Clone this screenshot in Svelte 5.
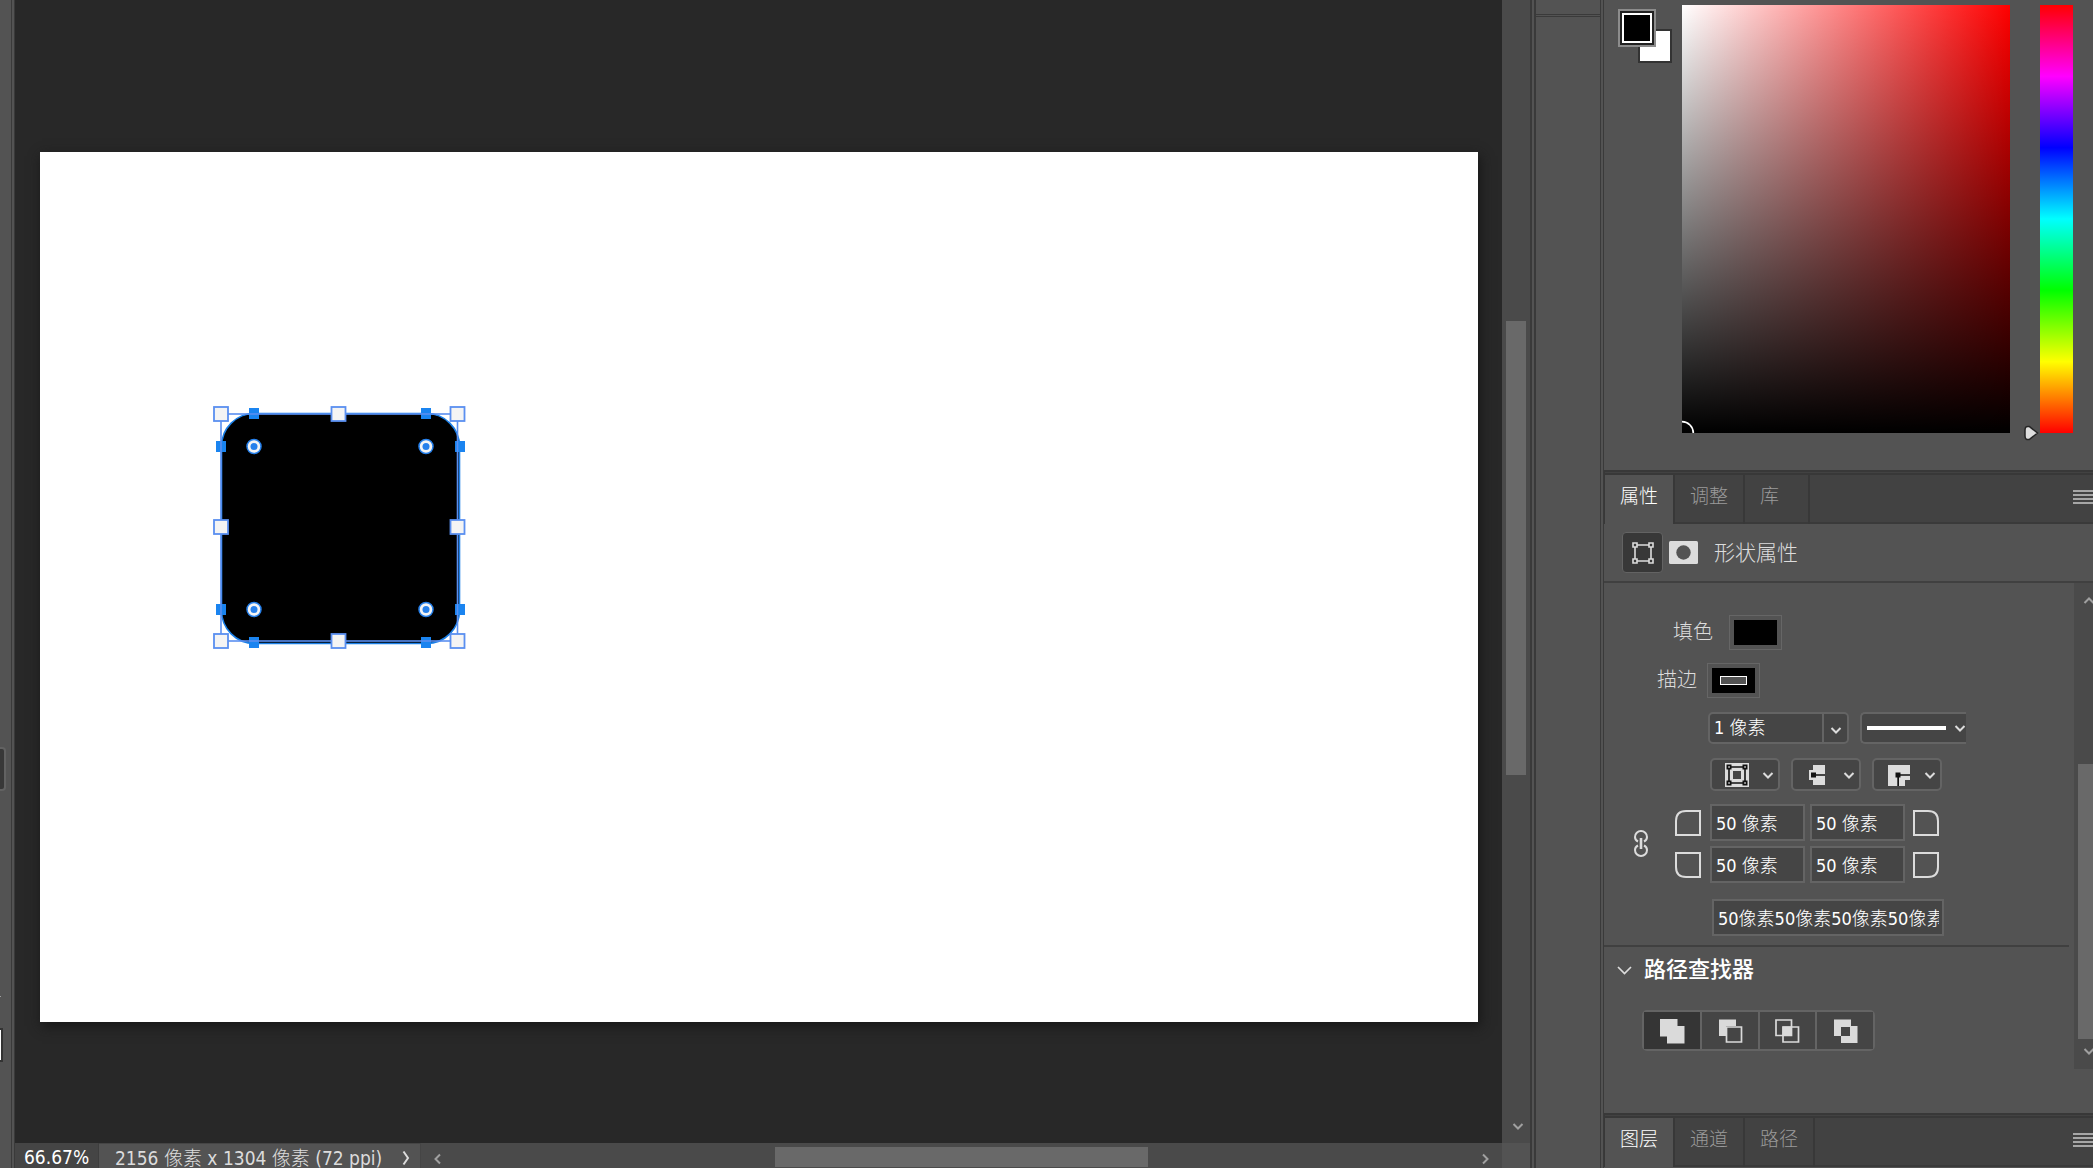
<script>
  let zoom = "66.67%"
  let strokeWidth = "1 像素"
  let radii = ["50 像素", "50 像素", "50 像素", "50 像素"]
  let radiusSummary = "50像素50像素50像素50像素"
  let activeOperation = "unite"

  const panelTabs = ["属性", "调整", "库"]
  const layerTabs = ["图层", "通道", "路径"]

  const boxHandles = [
    [21, 24],
    [138.5, 24],
    [257.5, 24],
    [21, 137],
    [257.5, 137],
    [21, 251],
    [138.5, 251],
    [257.5, 251],
  ]

  const anchors = [
    [53, 23],
    [225, 23],
    [20, 56],
    [259, 56],
    [20, 219],
    [259, 219],
    [53, 252],
    [225, 252],
  ]

  const cornerDots = [
    [54, 56.5],
    [226, 56.5],
    [54, 219.5],
    [226, 219.5],
  ]

  const operations = [
    { id: "unite", label: "合并形状" },
    { id: "subtract", label: "减去顶层形状" },
    { id: "intersect", label: "与形状区域相交" },
    { id: "exclude", label: "排除重叠形状" },
  ]
</script>

{#snippet chevron(direction)}
  <svg class="chevron {direction}" viewBox="0 0 12 12" aria-hidden="true">
    <path d="M1.5 4 6 8.500 10.500 4" />
  </svg>
{/snippet}

{#snippet tabBar(tabs)}
  <div class="tabs" role="tablist">
    {#each tabs as tab, i}
      <button class="tab" class:active={i === 0} role="tab" aria-selected={i === 0}>{tab}</button>
    {/each}
    <button class="menu" aria-label="面板菜单">
      <svg width="20" height="15" viewBox="0 0 20 15" aria-hidden="true">
        <path d="M0 1h20M0 5h20M0 9h20M0 13h20" stroke="#a6a6a6" stroke-width="2" />
      </svg>
    </button>
  </div>
{/snippet}

{#snippet corner(name)}
  <svg class="corner {name}" width="26" height="26" viewBox="0 0 26 26" aria-hidden="true">
    <path d="M1 25V11Q1 1 11 1H25V25Z" fill="none" stroke="#dcdcdc" stroke-width="2" />
  </svg>
{/snippet}

<div class="app">
  <div class="toolbar">
    <span class="tool"></span>
    <span class="toolbar-mark"></span>
    <span class="toolbar-swatch"></span>
  </div>

  <main>
    <div class="workspace">
      <div class="viewport">
        <div class="artboard">
          <svg class="shape" width="280" height="270" viewBox="0 0 280 270">
            <rect x="21.500" y="23.500" width="238" height="230" rx="33" fill="#000" stroke="#1b7fe6" stroke-width="1.600" />
            {#each anchors as [x, y]}
              <rect x={x - 4} y={y - 5} width="10" height="11" fill="#1a84f0" />
            {/each}
            <rect x="21" y="24" width="236.500" height="227" fill="none" stroke="#5a8ff0" stroke-width="1.600" />
            {#each boxHandles as [x, y]}
              <rect x={x - 7} y={y - 7} width="14" height="14" fill="#f4f4f4" stroke="#5a8ff0" stroke-width="1.800" />
            {/each}
            {#each cornerDots as [x, y]}
              <circle cx={x} cy={y} r="7" fill="#f4f4f4" stroke="#2680eb" stroke-width="1.500" />
              <circle cx={x} cy={y} r="3.500" fill="#2680eb" />
            {/each}
          </svg>
        </div>
      </div>
      <div class="scroll-y">
        <span class="thumb"></span>
        {@render chevron("down")}
      </div>
    </div>
    <footer>
      <input class="zoom" aria-label="缩放" bind:value={zoom} />
      <button class="info">
        <span>2156 像素 x 1304 像素 (72 ppi)</span>
        <svg width="8" height="16" viewBox="0 0 8 16" aria-hidden="true">
          <path d="M1.500 1.500 6 8 1.500 14.500" fill="none" stroke="#dcdcdc" stroke-width="2" />
        </svg>
      </button>
      <div class="scroll-x">
        {@render chevron("left")}
        <span class="thumb"></span>
        {@render chevron("right")}
      </div>
      <span class="resize"></span>
    </footer>
  </main>

  <div class="dock">
    <span class="dock-head"></span>
    <span class="dock-body"></span>
  </div>

  <aside>
    <section class="color">
      <div class="swatches">
        <button class="background" aria-label="背景色"></button>
        <button class="foreground" aria-label="前景色"></button>
      </div>
      <div class="field">
        <svg width="13" height="13" viewBox="0 0 13 13" aria-hidden="true">
          <circle cx="0" cy="13" r="11.300" fill="none" stroke="#fff" stroke-width="1.700" />
        </svg>
      </div>
      <svg class="pointer" width="15" height="16" viewBox="0 0 15 16" aria-hidden="true">
        <path d="M5.500 1.600 13.500 8 5.500 14.400Q1 15.500 1 11V5Q1 .5 5.500 1.600Z" fill="#dedede" stroke="#252525" stroke-width="1.500" />
      </svg>
      <div class="hue"></div>
    </section>

    <section class="properties">
      {@render tabBar(panelTabs)}
      <header>
        <button class="mode" aria-label="形状">
          <svg width="22" height="22" viewBox="0 0 22 22" aria-hidden="true">
            <g fill="none" stroke="#dcdcdc" stroke-width="1.600">
              <path d="M5 3H17M5 19H17M3 5V17M19 5V17" />
              <path d="M1 1h4v4H1zM17 1h4v4h-4zM1 17h4v4H1zM17 17h4v4h-4z" />
            </g>
          </svg>
        </button>
        <svg width="29" height="23" viewBox="0 0 29 23" aria-hidden="true">
          <rect width="29" height="23" rx="1.500" fill="#dcdcdc" />
          <circle cx="14.500" cy="11.500" r="7.200" fill="#535353" />
        </svg>
        <h2>形状属性</h2>
      </header>

      <div class="scroller">
        <div class="content">
          <div class="row fill">
            <span>填色</span>
            <button class="chip" aria-label="填色"><i></i></button>
          </div>
          <div class="row stroke">
            <span>描边</span>
            <button class="chip" aria-label="描边"><i><b></b></i></button>
          </div>

          <div class="row width">
            <div class="combo">
              <input aria-label="描边宽度" bind:value={strokeWidth} />
              <button aria-label="选择宽度">{@render chevron("down")}</button>
            </div>
            <div class="drop line">
              <select aria-label="描边类型"><option></option></select>
              <span class="face"><em></em>{@render chevron("down")}</span>
            </div>
          </div>

          <div class="row options">
            <div class="drop">
              <select aria-label="对齐"><option></option></select>
              <span class="face">
                <svg width="26" height="26" viewBox="0 0 26 26" aria-hidden="true">
                  <path d="M1 1H25V25H1Z" fill="#dcdcdc" />
                  <path d="M5 5H21V21H5Z" fill="none" stroke="#111" stroke-width="1.600" />
                  <path d="M9 9H17V17H9Z" fill="#454545" />
                  <path d="M2.500 2.500h5v5h-5zM18.500 2.500h5v5h-5zM2.500 18.500h5v5h-5zM18.500 18.500h5v5h-5z" fill="#111" />
                  <path d="M4.300 4.300h1.500v1.500h-1.500zM20.300 4.300h1.500v1.500h-1.500zM4.300 20.300h1.500v1.500h-1.500zM20.300 20.300h1.500v1.500h-1.500z" fill="#dcdcdc" />
                </svg>
                {@render chevron("down")}
              </span>
            </div>
            <div class="drop">
              <select aria-label="端点"><option></option></select>
              <span class="face">
                <svg width="26" height="26" viewBox="0 0 26 26" aria-hidden="true">
                  <path d="M8 3H20V23H8V18H4V8H8Z" fill="#dcdcdc" />
                  <path d="M6 10.500h5V12.300H20V13.800H11V15.500H6Z" fill="#111" />
                </svg>
                {@render chevron("down")}
              </span>
            </div>
            <div class="drop">
              <select aria-label="角点"><option></option></select>
              <span class="face">
                <svg width="26" height="26" viewBox="0 0 26 26" aria-hidden="true">
                  <path d="M2 3H24V18H19V24H2Z" fill="#dcdcdc" />
                  <path d="M9.500 10.500h5V12.300H24V13.800H14.500V15.500H13V24H11.300V15.500H9.500Z" fill="#111" />
                </svg>
                {@render chevron("down")}
              </span>
            </div>
          </div>

          <div class="radii">
            <button class="link" aria-label="链接圆角半径">
              <svg width="14" height="27" viewBox="0 0 14 27" aria-hidden="true">
                <g fill="none" stroke="#dcdcdc" stroke-width="2">
                  <path d="M4 11.500Q1 10 1 7A6 6 0 0 1 13 7Q13 10 10 11.500" />
                  <path d="M4 15.500Q1 17 1 20A6 6 0 0 0 13 20Q13 17 10 15.500" />
                  <path d="M7 8V19" stroke-width="2.600" />
                </g>
              </svg>
            </button>
            <div class="radius-grid">
              {@render corner("top-left")}
              <input aria-label="左上角半径" bind:value={radii[0]} />
              <input aria-label="右上角半径" bind:value={radii[1]} />
              {@render corner("top-right")}
              {@render corner("bottom-left")}
              <input aria-label="左下角半径" bind:value={radii[2]} />
              <input aria-label="右下角半径" bind:value={radii[3]} />
              {@render corner("bottom-right")}
            </div>
          </div>
          <input class="summary" aria-label="圆角半径" bind:value={radiusSummary} />

          <button class="heading">
            <svg width="15" height="9" viewBox="0 0 15 9" aria-hidden="true">
              <path d="M1 1 7.500 7.500 14 1" fill="none" stroke="#dcdcdc" stroke-width="1.700" />
            </svg>
            路径查找器
          </button>
          <div class="operations">
            {#each operations as { id, label }}
              <button
                class:active={activeOperation === id}
                aria-label={label}
                on:click={() => (activeOperation = id)}>
                <svg width="26" height="26" viewBox="0 0 26 26" aria-hidden="true">
                  {#if id === "unite"}
                    <path d="M1 1H18.500V8H25.500V25.500H8V18.500H1Z" fill="#dadada" />
                  {:else if id === "subtract"}
                    <path d="M2 1.500H19V8H9V18H2Z" fill="#dadada" />
                    <path d="M9.500 9H24.500V24H9.500Z" fill="none" stroke="#dadada" stroke-width="1.700" />
                  {:else if id === "intersect"}
                    <path d="M2 2H17.500V17.500H2ZM9 9H24.500V24H9Z" fill="none" stroke="#dadada" stroke-width="1.700" />
                    <path d="M8.500 8.500H18V18H8.500Z" fill="#dadada" />
                  {:else}
                    <path d="M2 1.500H19V8H25.500V25H9V18H2Z" fill="#dadada" />
                    <path d="M9 9H18V18H9Z" fill="#454545" />
                  {/if}
                </svg>
              </button>
            {/each}
          </div>
        </div>

        <div class="panel-scroll">
          {@render chevron("up")}
          <span class="thumb"></span>
          {@render chevron("down")}
        </div>
      </div>
    </section>

    <section class="layers">
      {@render tabBar(layerTabs)}
    </section>
  </aside>
</div>

<style>
  :global(body) {
    margin: 0;
    background: #535353;
  }

  .app {
    display: flex;
    height: 100vh;
    overflow: hidden;
    background: #535353;
    color: #dcdcdc;
    font-family: "DejaVu Sans Condensed", "Noto Sans CJK SC", sans-serif;
    font-size: 18px;
    font-weight: 300;
    line-height: 24px;
  }

  .app * {
    box-sizing: border-box;
  }

  button,
  input,
  select {
    margin: 0;
    padding: 0;
    border: 0;
    border-radius: 0;
    background: none;
    color: inherit;
    font: inherit;
    outline: none;
  }

  svg {
    display: block;
    flex: none;
  }

  .chevron {
    width: 12px;
    height: 12px;
    fill: none;
    stroke: #dcdcdc;
    stroke-width: 2;
  }

  .chevron.up {
    transform: rotate(180deg);
  }

  .chevron.left {
    transform: rotate(90deg);
  }

  .chevron.right {
    transform: rotate(-90deg);
  }

  .scroll-x .chevron,
  .scroll-y .chevron,
  .panel-scroll .chevron {
    stroke: #a0a0a0;
  }

  .thumb {
    background: #696969;
  }

  .toolbar {
    flex: none;
    display: flex;
    flex-direction: column;
    align-items: flex-start;
    width: 15px;
    padding-top: 747px;
    border-right: 4px double #3a3a3a;
  }

  .tool {
    width: 6px;
    height: 44px;
    border: 2px solid #626262;
    border-left: 0;
    border-radius: 0 4px 4px 0;
    background: #383838;
  }

  .toolbar-mark {
    width: 1px;
    height: 1px;
    margin-top: 205px;
    background: #a0a0a0;
  }

  .toolbar-swatch {
    width: 3px;
    height: 34px;
    margin-top: 31px;
    border: 2px solid #333;
    border-left: 0;
    background: #fff;
  }

  main {
    flex: 1;
    min-width: 0;
    display: flex;
    flex-direction: column;
  }

  .workspace {
    flex: 1;
    min-height: 0;
    display: flex;
  }

  .viewport {
    flex: 1;
    min-width: 0;
    overflow: hidden;
    padding: 152px 24px 0 25px;
    background: #282828;
  }

  .artboard {
    position: relative;
    aspect-ratio: 2156 / 1304;
    background: #fff;
    box-shadow: 2px 4px 12px #161616;
  }

  .shape {
    position: absolute;
    left: 160px;
    top: 238px;
  }

  .scroll-y {
    flex: none;
    display: grid;
    grid-template-rows: 321fr 454fr 368fr;
    justify-items: center;
    width: 28px;
    background: #4a4a4a;
  }

  .scroll-y .thumb {
    grid-row: 2;
    width: 20px;
  }

  .scroll-y .chevron {
    grid-row: 3;
    align-self: end;
    margin: 0 0 11px 3px;
  }

  footer {
    flex: none;
    display: flex;
    height: 25px;
    font-size: 19px;
    line-height: 20px;
  }

  .zoom {
    width: 84px;
    padding: 2px 0 0 9px;
    border-right: 1px solid #3e3e3e;
    background: #454545;
    color: #fff;
  }

  .info {
    display: flex;
    align-items: center;
    justify-content: space-between;
    width: 322px;
    padding: 4px 10px 0 16px;
    border-top: 1px solid #454545;
    border-right: 1px solid #454545;
    white-space: nowrap;
  }

  .scroll-x {
    flex: 1;
    display: grid;
    grid-template-columns: 354fr 373fr 354fr;
    align-items: center;
    background: #4a4a4a;
  }

  .scroll-x .thumb {
    height: 20px;
    margin-top: 3px;
  }

  .scroll-x .chevron {
    margin: 6px 11px 0;
  }

  .scroll-x .right {
    justify-self: end;
  }

  .resize {
    width: 28px;
  }

  .dock {
    flex: none;
    display: flex;
    flex-direction: column;
    width: 74px;
    border-left: 6px double #3a3a3a;
    border-right: 4px double #3a3a3a;
  }

  .dock-head {
    height: 17px;
    border-bottom: 3px double #3a3a3a;
  }

  .dock-body {
    flex: 1;
  }

  aside {
    flex: none;
    display: flex;
    flex-direction: column;
    width: 489px;
  }

  .color {
    flex: none;
    display: flex;
    align-items: flex-start;
    padding: 5px 20px 37px 14px;
  }

  .swatches {
    position: relative;
    flex: none;
    width: 64px;
    height: 64px;
  }

  .foreground {
    position: absolute;
    left: 0;
    top: 4px;
    width: 38px;
    height: 38px;
    border: 2px solid #8c8c8c;
    background: #000;
    box-shadow: inset 0 0 0 2px #222, inset 0 0 0 4px #fff;
  }

  .background {
    position: absolute;
    left: 20px;
    top: 24px;
    width: 34px;
    height: 34px;
    border: 2px solid #333;
    background: #fff;
  }

  .field {
    flex: 1;
    display: flex;
    align-items: flex-end;
    height: 428px;
    background: linear-gradient(to top, #000, transparent), linear-gradient(to right, #fff, #f00);
  }

  .pointer {
    align-self: flex-end;
    margin: 0 1px -8px 14px;
  }

  .hue {
    width: 33px;
    height: 428px;
    background: linear-gradient(#f00, #f0f, #00f, #0ff, #0f0, #ff0, #f00);
  }

  .properties {
    flex: 1;
    min-height: 0;
    display: flex;
    flex-direction: column;
  }

  .tabs {
    display: flex;
    height: 54px;
    border-top: 5px double #383838;
    border-left: 1px solid #383838;
    background: #424242;
    box-shadow: inset 0 -2px #3a3a3a;
    font-size: 19px;
  }

  .tab {
    min-width: 65px;
    padding: 0 15px 7px;
    border-right: 2px solid #383838;
    color: #9a9a9a;
    text-align: left;
  }

  .tab.active {
    width: 70px;
    background: #535353;
    color: #fff;
  }

  .menu {
    margin: 15px 0 0 auto;
    align-self: flex-start;
  }

  header {
    flex: none;
    display: flex;
    align-items: center;
    height: 59px;
    padding-left: 18px;
    border-bottom: 2px solid #404040;
  }

  .mode {
    display: grid;
    place-items: center;
    width: 41px;
    height: 41px;
    margin-right: 6px;
    border: 1px solid #636363;
    border-radius: 4px;
    background: #383838;
  }

  h2 {
    margin: 0 0 0 16px;
    font-size: 21px;
    font-weight: 300;
  }

  .scroller {
    flex: 1;
    min-height: 0;
    display: flex;
    align-items: flex-start;
  }

  .content {
    flex: 1;
    min-width: 0;
    padding-top: 32px;
  }

  .row {
    display: flex;
    align-items: center;
  }

  .row > span {
    padding-bottom: 2px;
    font-size: 20px;
  }

  .fill {
    gap: 16px;
    padding-left: 69px;
  }

  .stroke {
    gap: 10px;
    margin-top: 13px;
    padding-left: 53px;
  }

  .chip {
    width: 53px;
    height: 35px;
    padding: 4px;
    border: 1px solid #666;
  }

  .chip i {
    display: grid;
    place-items: center;
    height: 25px;
    background: #000;
  }

  .chip b {
    width: 27px;
    height: 9px;
    border: 1px solid #fff;
    background: #535353;
  }

  .width {
    gap: 11px;
    margin-top: 14px;
    padding-left: 104px;
  }

  .combo {
    display: flex;
    width: 141px;
    height: 32px;
    border: 2px solid #646464;
    border-radius: 5px;
    background: #454545;
  }

  .combo input {
    flex: 1;
    min-width: 0;
    padding-left: 4px;
    color: #fff;
  }

  .combo button {
    display: grid;
    place-items: center;
    width: 25px;
    padding-top: 4px;
    border-left: 2px solid #646464;
  }

  .drop {
    display: grid;
    width: 70px;
    height: 33px;
  }

  .drop select,
  .face {
    grid-area: 1 / 1;
  }

  .drop select {
    appearance: none;
    border: 2px solid #646464;
    border-radius: 5px;
    background: #454545;
  }

  .face {
    display: flex;
    align-items: center;
    justify-content: space-between;
    padding: 0 6px 0 14px;
    pointer-events: none;
  }

  .line {
    width: 106px;
    height: 32px;
  }

  .line select {
    border-right: 0;
    border-radius: 5px 0 0 5px;
  }

  .line .face {
    padding: 0 0 0 7px;
  }

  .line em {
    width: 79px;
    height: 4px;
    background: #fff;
  }

  .options {
    gap: 11px;
    margin-top: 14px;
    padding-left: 106px;
  }

  .radii {
    display: flex;
    align-items: center;
    margin-top: 13px;
    padding-left: 30px;
  }

  .radius-grid {
    display: grid;
    grid-template-columns: 26px 95px 95px 26px;
    align-items: center;
    gap: 5px;
    margin-left: 31px;
  }

  .radius-grid input,
  .summary {
    height: 37px;
    border: 2px solid #646464;
    background: #454545;
    color: #fff;
  }

  .radius-grid input {
    min-width: 0;
    padding: 0 0 2px 4px;
  }

  .radius-grid .corner:nth-child(4n + 1) {
    margin-left: -4px;
  }

  .radius-grid .corner:nth-child(4n) {
    margin-left: 3px;
  }

  .top-right {
    transform: scaleX(-1);
  }

  .bottom-left {
    transform: scaleY(-1);
  }

  .bottom-right {
    transform: scale(-1);
  }

  .summary {
    display: block;
    width: 232px;
    margin: 16px 0 9px 108px;
    padding: 0 3px 2px 4px;
  }

  .heading {
    display: flex;
    align-items: center;
    gap: 12px;
    width: 465px;
    padding: 11px 0 13px 13px;
    border-top: 2px solid #404040;
    color: #fff;
    font-size: 22px;
    font-weight: 500;
  }

  .operations {
    display: flex;
    gap: 2px;
    width: 233px;
    height: 41px;
    margin: 15px 0 0 38px;
    border: 2px solid #646464;
    border-radius: 5px;
    background: #646464;
  }

  .operations button {
    flex: 1;
    display: grid;
    place-items: center;
    background: #454545;
  }

  .operations .active {
    background: #353535;
  }

  .panel-scroll {
    display: flex;
    flex-direction: column;
    align-items: flex-end;
    width: 19px;
    height: 486px;
    padding: 12px 0;
    overflow: hidden;
    background: #4a4a4a;
  }

  .panel-scroll .chevron {
    margin-right: -2px;
  }

  .panel-scroll .thumb {
    width: 15px;
    height: 275px;
    margin: auto 0 6px;
  }

  .layers {
    flex: none;
    height: 55px;
  }
</style>
